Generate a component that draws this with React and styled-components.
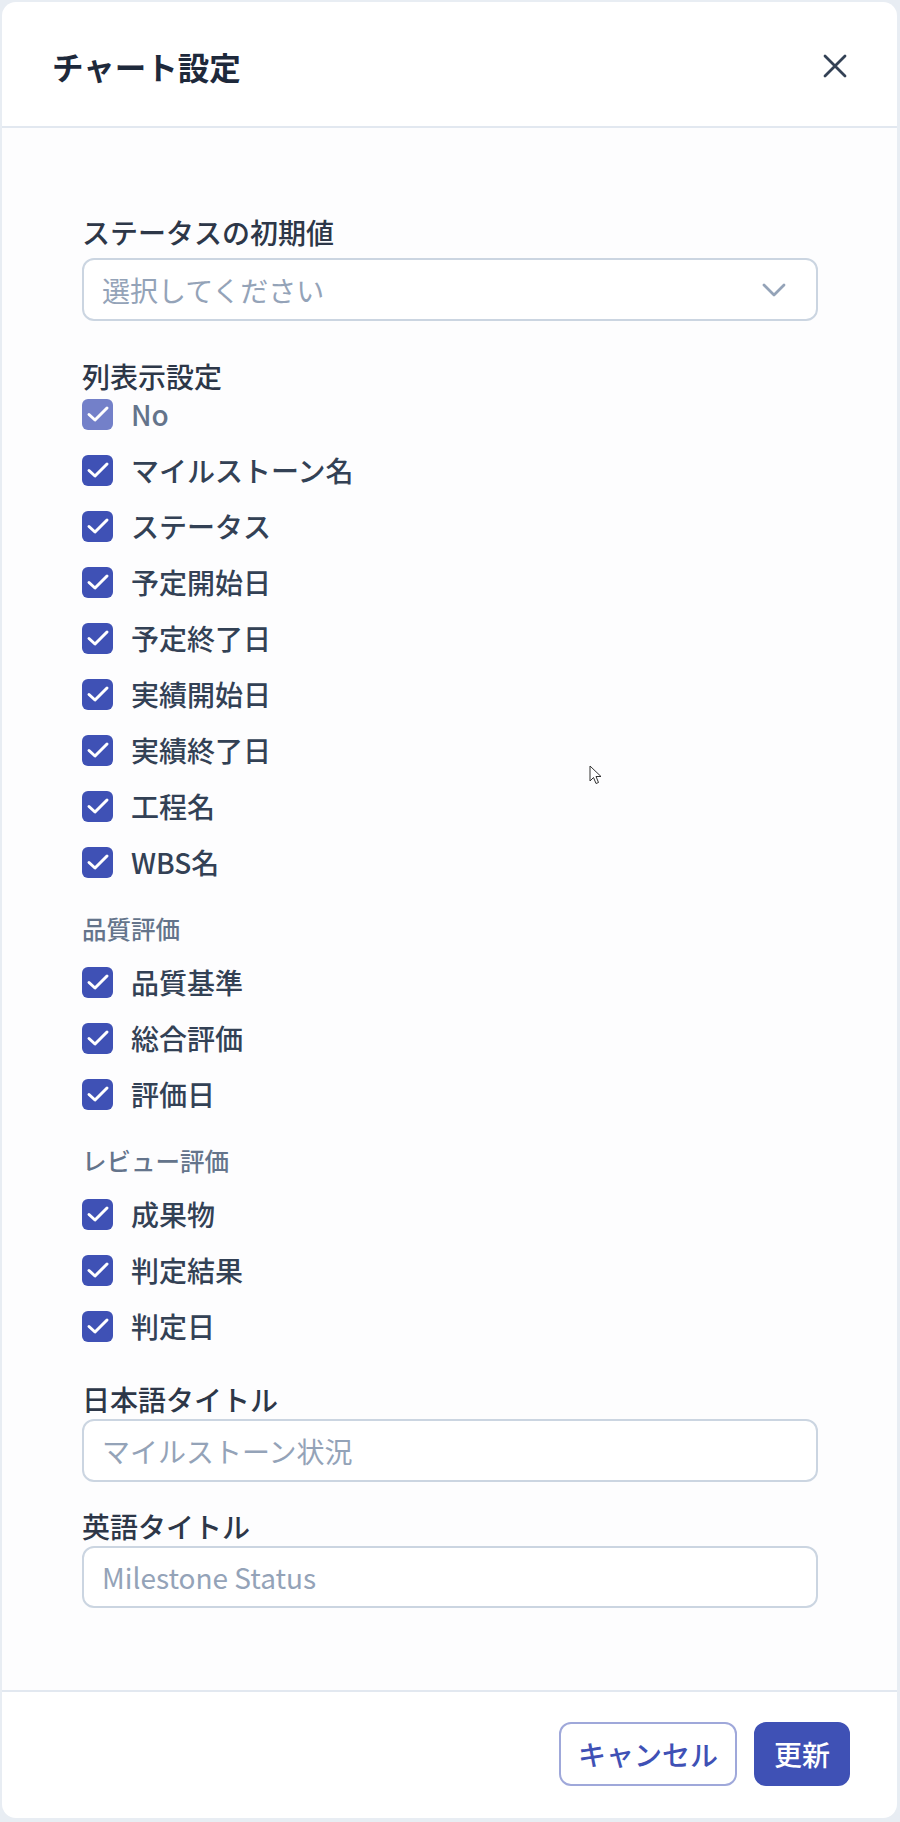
import React from "react";
import styled, { createGlobalStyle } from "styled-components";

const MEDIUM = `"Noto Sans CJK JP Medium", "Noto Sans CJK JP", "Noto Sans", sans-serif`;

const Global = createGlobalStyle`
  html, body { margin: 0; padding: 0; }
  body {
    background: #e8edf3;
    font-family: "Noto Sans CJK JP", "Noto Sans", sans-serif;
    -webkit-font-smoothing: antialiased;
  }
  * { box-sizing: border-box; }
`;

const Card = styled.div`
  position: relative;
  margin: 2px 0 0 2px;
  width: 895px;
  height: 1816px;
  background: #ffffff;
  border-radius: 14px;
  display: flex;
  flex-direction: column;
  overflow: hidden;
`;

const Header = styled.header`
  height: 126px;
  padding: 4px 50px 0 50px;
  border-bottom: 2px solid #e2e8f0;
  display: flex;
  align-items: center;
  justify-content: space-between;
`;

const Title = styled.h2`
  margin: 0;
  font-size: 31.5px;
  font-weight: 700;
  color: #1e293b;
  line-height: 40px;
`;

const CloseButton = styled.button`
  width: 36px;
  height: 36px;
  padding: 0;
  border: none;
  background: transparent;
  display: flex;
  align-items: center;
  justify-content: center;
  margin-right: -6px;
  cursor: pointer;
`;

const Body = styled.div`
  flex: 1;
  padding: 84px 79px 0 80px;
  background: #fdfdfe;
  display: flex;
  flex-direction: column;
`;

const FieldLabel = styled.div`
  font-family: ${MEDIUM};
  font-size: 28px;
  line-height: 40px;
  font-weight: 400;
  color: #2d3748;
  margin-top: ${(p) => p.$mt || 0}px;
  margin-bottom: ${(p) => p.$mb || 0}px;
`;

const GroupLabel = styled.div`
  font-family: ${MEDIUM};
  font-size: 24.5px;
  line-height: 36px;
  font-weight: 400;
  color: #64748b;
  margin-top: 29px;
`;

const Select = styled.div`
  height: 63px;
  border: 2px solid #cbd5e1;
  border-radius: 12px;
  background: #fff;
  display: flex;
  align-items: center;
  justify-content: space-between;
  padding: 0 30px 0 18px;
`;

const Placeholder = styled.span`
  font-size: 28px;
  font-weight: 400;
  color: #94a3b8;
  line-height: 40px;
`;

const Input = styled.div`
  height: ${(p) => p.$h}px;
  border: 2px solid #cbd5e1;
  border-radius: 12px;
  background: #fff;
  display: flex;
  align-items: center;
  padding: 0 18px;
`;

const CheckList = styled.div`
  display: flex;
  flex-direction: column;
  gap: 16px;
  margin-top: ${(p) => p.$mt}px;
`;

const Row = styled.label`
  height: 40px;
  display: flex;
  align-items: center;
  gap: 18px;
`;

const Box = styled.span`
  width: 31px;
  height: 31px;
  border-radius: 6px;
  background: #3f51b5;
  display: flex;
  align-items: center;
  justify-content: center;
  opacity: ${(p) => (p.$disabled ? 0.72 : 1)};
  flex-shrink: 0;
`;

const RowText = styled.span`
  font-family: ${MEDIUM};
  font-size: 28px;
  line-height: 40px;
  font-weight: 400;
  color: ${(p) => (p.$disabled ? "#64748b" : "#334155")};
`;

const Footer = styled.footer`
  height: 128px;
  border-top: 2px solid #e2e8f0;
  display: flex;
  align-items: center;
  justify-content: flex-end;
  gap: 17px;
  padding: 0 47px 2px 0;
`;

const Button = styled.button`
  height: 64px;
  width: ${(p) => p.$w}px;
  padding: 0;
  white-space: nowrap;
  display: flex;
  align-items: center;
  justify-content: center;
  border-radius: 12px;
  font-family: ${MEDIUM};
  font-size: 28px;
  font-weight: 400;
  border: 2px solid ${(p) => (p.$primary ? "#3f51b5" : "#9fa8da")};
  background: ${(p) => (p.$primary ? "#3f51b5" : "#ffffff")};
  color: ${(p) => (p.$primary ? "#ffffff" : "#3f51b5")};
`;

const Pointer = styled.svg`
  position: absolute;
  left: 587px;
  top: 763px;
`;

const Check = () => (
  <svg width="24" height="24" viewBox="0 0 24 24" fill="none">
    <path d="M3 12.5 L9 18 L21 6" stroke="#fff" strokeWidth="3" strokeLinecap="round" strokeLinejoin="round" />
  </svg>
);

const CheckRow = ({ children, disabled }) => (
  <Row>
    <Box $disabled={disabled}>
      <Check />
    </Box>
    <RowText $disabled={disabled}>{children}</RowText>
  </Row>
);

const columns = ["マイルストーン名", "ステータス", "予定開始日", "予定終了日", "実績開始日", "実績終了日", "工程名", "WBS名"];
const quality = ["品質基準", "総合評価", "評価日"];
const review = ["成果物", "判定結果", "判定日"];

export default function App() {
  return (
    <>
      <Global />
      <Card>
        <Header>
          <Title>チャート設定</Title>
          <CloseButton aria-label="close">
            <svg width="24" height="24" viewBox="0 0 24 24" fill="none">
              <path d="M2 2 L22 22 M22 2 L2 22" stroke="#334155" strokeWidth="2.8" strokeLinecap="round" />
            </svg>
          </CloseButton>
        </Header>
        <Body>
          <FieldLabel $mb={6}>ステータスの初期値</FieldLabel>
          <Select>
            <Placeholder>選択してください</Placeholder>
            <svg width="24" height="14" viewBox="0 0 24 14" fill="none">
              <path d="M2 2 L12 12 L22 2" stroke="#94a3b8" strokeWidth="2.8" strokeLinecap="round" strokeLinejoin="round" />
            </svg>
          </Select>

          <FieldLabel $mt={35}>列表示設定</FieldLabel>
          <CheckList $mt={-2}>
            <CheckRow disabled>No</CheckRow>
            {columns.map((c) => (
              <CheckRow key={c}>{c}</CheckRow>
            ))}
          </CheckList>

          <GroupLabel>品質評価</GroupLabel>
          <CheckList $mt={15}>
            {quality.map((c) => (
              <CheckRow key={c}>{c}</CheckRow>
            ))}
          </CheckList>

          <GroupLabel>レビュー評価</GroupLabel>
          <CheckList $mt={15}>
            {review.map((c) => (
              <CheckRow key={c}>{c}</CheckRow>
            ))}
          </CheckList>

          <FieldLabel $mt={33}>日本語タイトル</FieldLabel>
          <Input $h={63}>
            <Placeholder>マイルストーン状況</Placeholder>
          </Input>

          <FieldLabel $mt={24}>英語タイトル</FieldLabel>
          <Input $h={62}>
            <Placeholder>Milestone Status</Placeholder>
          </Input>
        </Body>
        <Footer>
          <Button $w={178}>キャンセル</Button>
          <Button $primary $w={96}>更新</Button>
        </Footer>
        <Pointer width="14" height="20" viewBox="0 0 14 20">
          <path d="M1 1 L1 16 L4.5 12.5 L7 18.5 L9.5 17.5 L7 11.5 L12 11.5 Z" fill="#fff" stroke="#333" strokeWidth="1" strokeLinejoin="round" />
        </Pointer>
      </Card>
    </>
  );
}
